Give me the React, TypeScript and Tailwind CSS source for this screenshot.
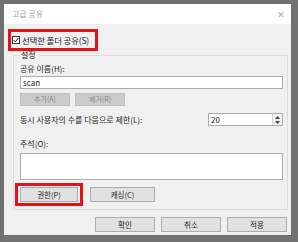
export default function App() {
  return (
    <div
      className="w-[298px] h-[242px] bg-[#717171] pl-[4px] pt-[4px] pr-[7px] pb-[7px] text-[#1e1e1e]"
      style={{ fontFamily: '"Noto Sans CJK KR", "Noto Sans", sans-serif' }}
    >
      <div className="w-full h-full flex flex-col">
        {/* Title bar */}
        <div className="h-[20px] bg-white flex items-center justify-between pl-[8px] pr-[6px]">
          <span className="text-[8px] leading-none text-[#a3a3a3]">고급 공유</span>
          <span className="text-[9px] leading-none text-[#a8a8a8]">✕</span>
        </div>

        {/* Body */}
        <div className="flex-1 bg-[#f0f0f0] flex flex-col">
          <div className="relative z-10 mt-[5px] ml-[4px] w-[90px] h-[22px] border-[3px] border-[#e3121b] flex items-center gap-[2px] pl-[1px]">
            <span className="w-[8px] h-[8px] shrink-0 border border-[#333] bg-white flex items-center justify-center">
              <svg width="6" height="6" viewBox="0 0 6 6">
                <path d="M0.6 3.1 L2.3 4.8 L5.5 1" fill="none" stroke="#222" strokeWidth="1" />
              </svg>
            </span>
            <span className="text-[8.5px] leading-none whitespace-nowrap tracking-[-0.2px]">선택한 폴더 공유(S)</span>
          </div>

          {/* Settings group */}
          <div className="relative mt-[4px] ml-[9px] w-[275px] h-[155px] border border-[#dcdcdc] pl-[6px] pr-[4px] pt-[7px]">
            <span className="absolute -top-[7px] left-[6px] bg-[#f0f0f0] px-[1px] text-[8px] leading-[11px]">설정</span>
            <div className="text-[8px] leading-[11px]">공유 이름(H):</div>
            <div className="mt-[2px] h-[13px] bg-white border border-[#adadad] flex items-center pl-[2px] text-[8px] leading-none">
              scan
            </div>
            <div className="mt-[4px] flex gap-[5px]">
              <div className="w-[50px] h-[13px] bg-[#cccccc] border border-[#bfbfbf] flex items-center justify-center text-[7px] leading-none text-[#8a8a8a]">
                추가(A)
              </div>
              <div className="w-[50px] h-[13px] bg-[#cccccc] border border-[#bfbfbf] flex items-center justify-center text-[7px] leading-none text-[#8a8a8a]">
                제거(R)
              </div>
            </div>
            <div className="mt-[7px] flex items-center justify-between">
              <span className="text-[8px] leading-none whitespace-nowrap">동시 사용자의 수를 다음으로 제한(L):</span>
              <div className="w-[75px] h-[13px] bg-white border border-[#adadad] flex">
                <span className="flex-1 flex items-center pl-[2px] text-[8px] leading-none">20</span>
                <div className="w-[10px] flex flex-col items-center justify-center gap-[2px] bg-[#f3f3f3] border-l border-[#d4d4d4]">
                  <svg width="5" height="3" viewBox="0 0 5 3"><path d="M0 3 L2.5 0 L5 3 Z" fill="#444" /></svg>
                  <svg width="5" height="3" viewBox="0 0 5 3"><path d="M0 0 L2.5 3 L5 0 Z" fill="#444" /></svg>
                </div>
              </div>
            </div>
            <div className="mt-[12px] text-[8px] leading-[11px]">주석(O):</div>
            <div className="mt-[4px] h-[27px] bg-white border border-[#adadad]" />
            <div className="mt-[3px] -ml-[5px] flex items-center gap-[7px]">
              <div className="w-[68px] h-[23px] border-[3px] border-[#e3121b] flex items-center pl-[2px]">
                <div className="w-[58px] h-[15px] bg-[#e1e1e1] border border-[#adadad] flex items-center justify-center text-[7.5px] leading-none">
                  권한(P)
                </div>
              </div>
              <div className="w-[65px] h-[15px] bg-[#e1e1e1] border border-[#adadad] flex items-center justify-center text-[7.5px] leading-none">
                캐싱(C)
              </div>
            </div>
          </div>

          {/* Dialog buttons */}
          <div className="mt-[7px] flex justify-end gap-[6px] pr-[4px]">
            <div className="w-[60px] h-[15px] bg-[#e1e1e1] border border-[#adadad] flex items-center justify-center text-[7.5px] leading-none">
              확인
            </div>
            <div className="w-[60px] h-[15px] bg-[#e1e1e1] border border-[#adadad] flex items-center justify-center text-[7.5px] leading-none">
              취소
            </div>
            <div className="w-[60px] h-[15px] bg-[#e1e1e1] border border-[#adadad] flex items-center justify-center text-[7.5px] leading-none">
              적용
            </div>
          </div>
        </div>
      </div>
    </div>
  );
}
